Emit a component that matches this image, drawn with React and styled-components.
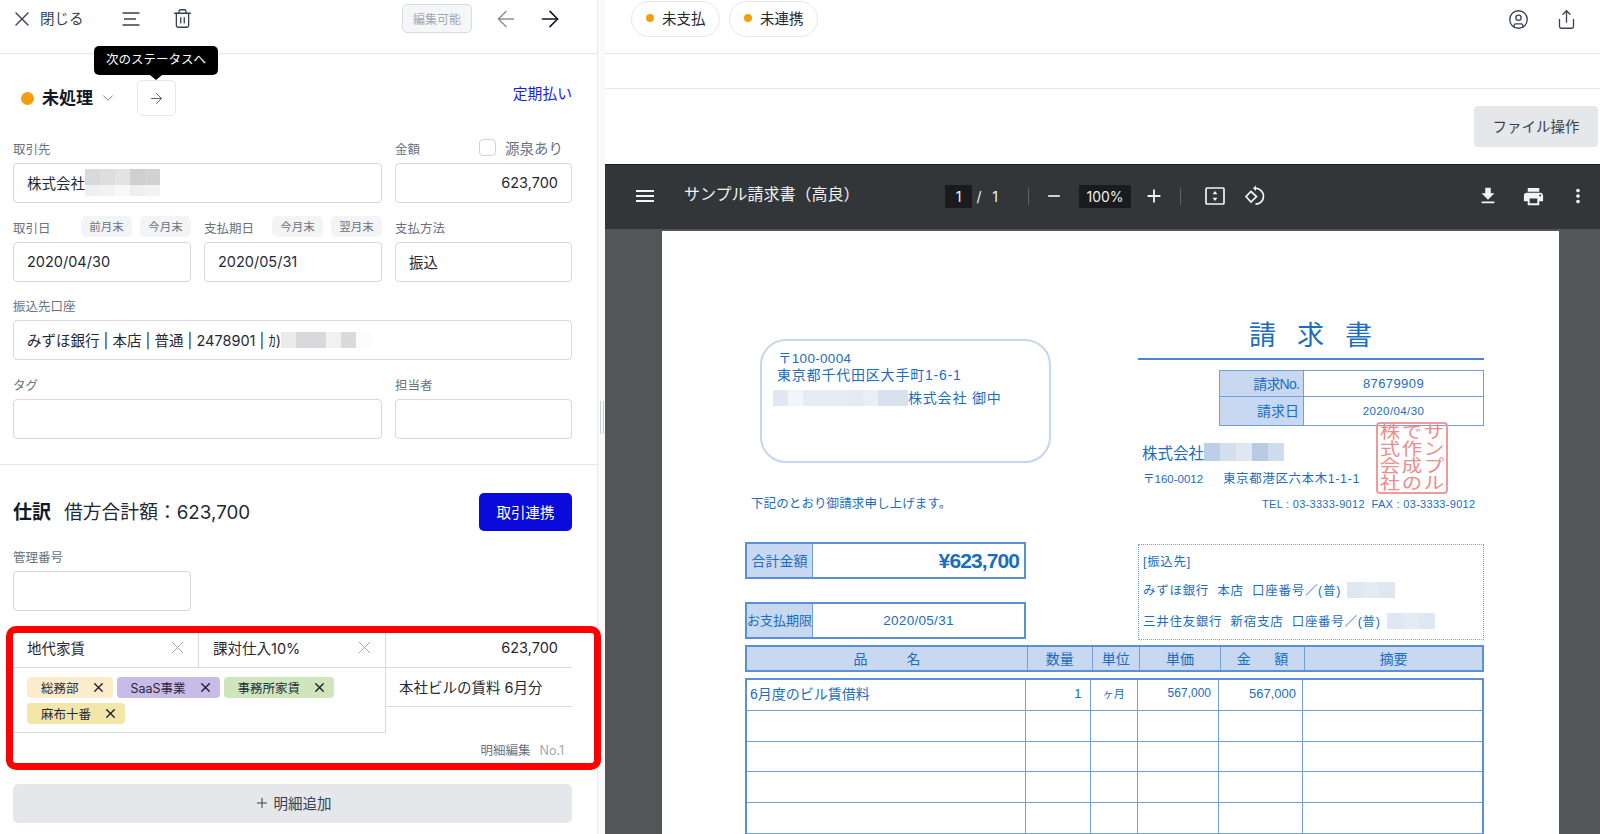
import React from 'react'
import styled, { createGlobalStyle } from 'styled-components'
import { X, Trash2, ArrowLeft, ArrowRight, ChevronDown, CircleUser, Share, Plus } from 'lucide-react'
import { MdMenu, MdFileDownload, MdPrint, MdMoreVert, MdRemove, MdAdd } from 'react-icons/md'

const GlobalStyle = createGlobalStyle`
  html, body { margin: 0; padding: 0; height: 100%; overflow: hidden; background: #fff; }
  body { font-family: Inter, "Noto Sans CJK JP", sans-serif; color: #1f2937; }
  * { box-sizing: border-box; }
`

const Page = styled.div`
  display: flex;
  width: 1600px;
  height: 834px;
  overflow: hidden;
`

/* left panel */
const Panel = styled.div`
  position: relative;
  flex: 0 0 597px;
  height: 834px;
`
const TopBar = styled.div`
  display: flex;
  align-items: center;
  height: 54px;
  padding: 0 34px 16px 10px;
  border-bottom: 1px solid #e5e7eb;
  color: #374151;
`
const CloseText = styled.span`
  margin: -2px 0 0 6px;
  font-size: 14.5px;
`
const BarIcon = styled.span`
  display: flex;
  margin-left: ${p => p.$left}px;
  color: ${p => p.$color || '#374151'};
`
const Editable = styled.span`
  display: flex;
  align-items: center;
  justify-content: center;
  width: 70px;
  height: 29px;
  margin-left: auto;
  padding-bottom: 1px;
  border: 1px solid #d8dbe3;
  border-radius: 5px;
  background: #f5f6f8;
  color: #a3a8b2;
  font-size: 12px;
`
const StatusRow = styled.div`
  display: flex;
  align-items: center;
  height: 36px;
  margin-top: 26px;
  padding: 0 25px 0 21px;
`
const Dot = styled.span`
  width: ${p => p.$size}px;
  height: ${p => p.$size}px;
  border-radius: 50%;
  background: #f59e0b;
  flex: none;
`
const StatusName = styled.span`
  margin: -3px 0 0 8px;
  font-size: 17px;
  font-weight: 700;
  color: #111827;
`
const NextWrap = styled.div`
  position: relative;
  margin-left: 20px;
`
const NextButton = styled.div`
  display: flex;
  align-items: center;
  justify-content: center;
  width: 39px;
  height: 36px;
  border: 1px solid #e5e7eb;
  border-radius: 5px;
  color: #4b5563;
`
const Tooltip = styled.div`
  position: absolute;
  top: -34px;
  left: -43px;
  width: 124px;
  height: 29px;
  border-radius: 5px;
  background: #000;
  color: #fff;
  font-size: 12.5px;
  line-height: 28px;
  text-align: center;
  &::after {
    content: '';
    position: absolute;
    left: 56px;
    bottom: -5px;
    border-left: 6px solid transparent;
    border-right: 6px solid transparent;
    border-top: 5px solid #000;
  }
`
const Recurring = styled.a`
  margin: -12px 0 0 auto;
  color: #1a1af0;
  font-size: 14.8px;
`
const Form = styled.div`
  padding: 21px 25px 0 13px;
`
const FormRow = styled.div`
  display: grid;
  grid-template-columns: ${p => p.$cols};
  column-gap: 13px;
  margin-bottom: 12.67px;
  &:last-child { margin-bottom: 0; }
`
const LabelRow = styled.div`
  display: flex;
  justify-content: space-between;
  height: 26px;
`
const Label = styled.span`
  padding-top: 3px;
  font-size: 12.5px;
  line-height: 20px;
  color: #6b7280;
`
const Chips = styled.div`
  display: flex;
  gap: 8px;
`
const Chip = styled.span`
  display: flex;
  align-items: center;
  justify-content: center;
  width: 51px;
  height: 21px;
  padding-bottom: 1px;
  border-radius: 5px;
  background: #f3f4f6;
  color: #6b7280;
  font-size: 11.5px;
`
const Withholding = styled.label`
  display: flex;
  align-items: center;
  height: 20px;
  margin-right: 9px;
  gap: 9px;
  color: #6b7280;
  font-size: 14.5px;
`
const CheckBox = styled.span`
  width: 17px;
  height: 17px;
  border: 1px solid #d1d5db;
  border-radius: 4px;
`
const Input = styled.div`
  display: flex;
  align-items: center;
  justify-content: ${p => (p.$right ? 'flex-end' : 'flex-start')};
  height: 40px;
  padding: 0 13px 1px;
  border: 1px solid #d5d8e0;
  border-radius: 4px;
  font-size: 14.5px;
  color: #1f2937;
  white-space: nowrap;
`
const MosaicGrid = styled.span`
  display: inline-grid;
  flex: none;
  grid-template-columns: repeat(${p => p.$cols}, ${p => p.$w}px);
  grid-auto-rows: ${p => p.$h};
`
const Cell = styled.span`
  background: ${p => p.$tone};
`

function Mosaic({ tones, w, h = 'auto', cols }) {
  return (
    <MosaicGrid $cols={cols || tones.length} $w={w} $h={h}>
      {tones.map((tone, i) => <Cell key={i} $tone={tone} />)}
    </MosaicGrid>
  )
}

const CompanyBlur = styled.span`
  display: flex;
  height: ${p => p.$h}px;
`
const Divider = styled.div`
  height: 1px;
  margin-top: 25px;
  background: #e5e7eb;
`
const Journal = styled.div`
  padding: 28px 25px 0 13px;
`
const JournalHead = styled.div`
  display: flex;
  align-items: center;
  height: 38px;
`
const JournalTitle = styled.span`
  margin-bottom: 2px;
  font-size: 19px;
  font-weight: 700;
  color: #111827;
`
const JournalTotal = styled.span`
  margin: 0 0 2px 13px;
  font-size: 18.8px;
  color: #1f2937;
`
const LinkButton = styled.button`
  width: 93px;
  height: 38px;
  margin-left: auto;
  padding-bottom: 2px;
  border: 0;
  border-radius: 5px;
  background: #0a0adc;
  color: #fff;
  font: inherit;
  font-size: 14.5px;
`
const ManageField = styled.div`
  width: 178px;
  margin: 14px 0 21px;
`
const LineBox = styled.div`
  position: relative;
`
const LineTop = styled.div`
  display: grid;
  grid-template-columns: 186px 187px 186px;
  height: 36px;
  border-bottom: 1px solid #d8dbe5;
`
const LineCell = styled.div`
  display: flex;
  align-items: center;
  justify-content: ${p => (p.$right ? 'flex-end' : 'space-between')};
  padding: 0 ${p => (p.$right ? 14 : 10)}px 3px 14px;
  border-right: ${p => (p.$right ? 0 : '1px solid #d8dbe5')};
  font-size: 14.5px;
  color: #1f2937;
`
const LineBottom = styled.div`
  display: grid;
  grid-template-columns: 373px 186px;
  align-items: start;
`
const TagCell = styled.div`
  display: flex;
  flex-wrap: wrap;
  align-content: flex-start;
  gap: 5px 4px;
  height: 65px;
  padding: 9px 14px 0;
  border-right: 1px solid #d8dbe5;
  border-bottom: 1px solid #d8dbe5;
`
const Tag = styled.span`
  display: flex;
  align-items: center;
  height: 21px;
  padding: 0 7px 0 14px;
  border-radius: 4px;
  background: ${p => p.$bg};
  color: #1f2937;
  font-size: 12.5px;
`
const TagX = styled(X)`
  margin-left: 12px;
  color: #111827;
`
const MemoCell = styled.div`
  display: flex;
  align-items: center;
  height: 39px;
  padding-left: 13px;
  border-bottom: 1px solid #d8dbe5;
  font-size: 14.5px;
  color: #1f2937;
`
const LineFoot = styled.div`
  display: flex;
  justify-content: flex-end;
  height: 36px;
  padding: 8px 8px 0 0;
  font-size: 12.5px;
  line-height: 20px;
  color: #6b7280;
`
const LineNo = styled.span`
  margin-left: 9px;
  color: #a3a8b2;
`
const Highlight = styled.div`
  position: absolute;
  top: -6px;
  left: -7px;
  width: 595px;
  height: 144px;
  border: 7px solid #ff0000;
  border-radius: 10px;
  z-index: 3;
  pointer-events: none;
`
const AddLine = styled.div`
  display: flex;
  align-items: center;
  justify-content: center;
  gap: 4px;
  height: 39px;
  margin-top: 15px;
  padding-bottom: 1px;
  border-radius: 5px;
  background: #e5e7eb;
  color: #374151;
  font-size: 14.5px;
`

/* splitter */
const Splitter = styled.div`
  flex: 0 0 8px;
  display: flex;
  align-items: flex-start;
  justify-content: center;
  gap: 2px;
  padding-top: 401px;
  border-left: 1px solid #e5e7eb;
  background: #fafafa;
`
const Grip = styled.span`
  width: 1px;
  height: 33px;
  background: #c9ccd1;
`

/* right panel */
const Viewer = styled.div`
  flex: 1;
  min-width: 0;
  display: flex;
  flex-direction: column;
  height: 834px;
`
const PillBar = styled.div`
  display: flex;
  align-items: flex-start;
  gap: 9px;
  height: 54px;
  padding: 1px 0 0 26px;
  border-bottom: 1px solid #e5e7eb;
`
const Pill = styled.span`
  display: flex;
  align-items: center;
  gap: 8px;
  width: 89px;
  height: 36px;
  padding: 0 0 3px 14px;
  border: 1px solid #e5e7eb;
  border-radius: 18px;
  font-size: 14.5px;
  color: #1f2937;
`
const PillIcons = styled.div`
  display: flex;
  align-items: center;
  gap: 27px;
  height: 36px;
  margin-left: auto;
  padding-right: 23px;
  color: #374151;
`
const EmptyBar = styled.div`
  height: 35px;
  border-bottom: 1px solid #e5e7eb;
`
const ActionBar = styled.div`
  display: flex;
  justify-content: flex-end;
  height: 75px;
  padding: 17px 2px 0 0;
`
const FileButton = styled.div`
  display: flex;
  align-items: center;
  justify-content: center;
  width: 124px;
  height: 41px;
  padding-bottom: 3px;
  border-radius: 4px;
  background: #e5e7eb;
  color: #374151;
  font-size: 14.5px;
`
const PdfBar = styled.div`
  display: flex;
  align-items: center;
  flex: 0 0 65px;
  padding: 0 10px 2px 28px;
  border-top: 1px solid #1c1e20;
  background: #323639;
  color: #f1f3f4;
`
const PdfTitle = styled.span`
  flex: 0 0 261px;
  margin: 0 0 6px 27px;
  font-size: 16px;
`
const PdfBox = styled.span`
  flex: none;
  width: ${p => p.$w}px;
  height: 23px;
  margin-left: ${p => p.$left || 0}px;
  background: #191b1c;
  font-size: 14px;
  line-height: 23px;
  text-align: center;
`
const PdfText = styled.span`
  flex: none;
  width: ${p => p.$w}px;
  font-size: 14px;
  text-align: center;
`
const PdfRule = styled.span`
  flex: none;
  width: 1px;
  height: 17px;
  margin-left: ${p => p.$left}px;
  background: #5f6368;
`
const PdfIcon = styled.span`
  flex: none;
  display: flex;
  justify-content: center;
  width: 24px;
  margin-left: ${p => p.$left}px;
  ${p => p.$push && 'margin-left: auto;'}
`
const PdfBody = styled.div`
  flex: 1;
  min-height: 0;
  overflow: hidden;
  padding: 2px 0 0 57px;
  background: #525659;
`
const Paper = styled.div`
  width: 897px;
  height: 640px;
  padding: 91px 75px 0 83px;
  background: #fff;
  color: #1a6dbf;
  font-family: "Liberation Sans", "Noto Sans CJK JP", sans-serif;
`
const PaperTop = styled.div`
  display: grid;
  grid-template-columns: 393px 346px;
  height: 323px;
`
const AddressBox = styled.div`
  width: 291px;
  height: 124px;
  margin: 17px 0 0 15px;
  padding: 9px 0 0 15px;
  border: 2px solid #c5d6ee;
  border-radius: 26px;
  font-size: 14px;
  line-height: 17px;
`
const AddressLine = styled.div`
  display: flex;
  align-items: flex-start;
  margin: ${p => p.$top || 0}px 0 0 ${p => p.$left || 0}px;
  font-size: ${p => p.$size || 14}px;
  letter-spacing: ${p => p.$spacing || 0.8}px;
`
const Notice = styled.div`
  margin: 32px 0 0 6px;
  font-size: 12.5px;
  line-height: 18px;
  letter-spacing: 0.1px;
`
const DocBox = styled.div`
  display: grid;
  grid-template-columns: 66px 1fr;
  width: 281px;
  height: ${p => p.$h}px;
  margin-top: ${p => p.$top}px;
  border: 2px solid #5a90d8;
`
const DocLabel = styled.div`
  display: flex;
  align-items: center;
  justify-content: center;
  padding-bottom: 2px;
  border-right: 1px solid #6f9fdc;
  background: #c8d8f0;
  font-size: ${p => p.$size}px;
  white-space: nowrap;
`
const DocValue = styled.div`
  display: flex;
  align-items: center;
  justify-content: ${p => (p.$right ? 'flex-end' : 'center')};
  padding-right: ${p => (p.$right ? '5px' : 0)};
  font-size: ${p => p.$size}px;
  font-weight: ${p => (p.$bold ? 700 : 400)};
  letter-spacing: ${p => p.$spacing}px;
`
const DocRight = styled.div`
  position: relative;
`
const DocTitle = styled.div`
  height: 36px;
  padding-left: 111px;
  font-size: 27px;
  line-height: 28px;
  letter-spacing: 21px;
  white-space: nowrap;
`
const TitleRule = styled.div`
  height: 2px;
  background: #4a86d0;
`
const InfoTable = styled.div`
  display: grid;
  grid-template-columns: 84px 1fr;
  grid-template-rows: 26px 28px;
  width: 265px;
  margin: 10px 0 0 81px;
  border: 1px solid #6f9fdc;
`
const InfoLabel = styled.div`
  display: flex;
  align-items: center;
  justify-content: flex-end;
  padding: 0 4px 2px 0;
  border-right: 1px solid #6f9fdc;
  border-bottom: ${p => (p.$last ? 0 : '1px solid #6f9fdc')};
  background: #c8d8f0;
  font-size: 14px;
  letter-spacing: ${p => p.$spacing || 0}px;
`
const InfoValue = styled.div`
  display: flex;
  align-items: center;
  justify-content: center;
  border-bottom: ${p => (p.$last ? 0 : '1px solid #6f9fdc')};
  font-size: ${p => p.$size}px;
  letter-spacing: 0.4px;
`
const Company = styled.div`
  display: flex;
  align-items: center;
  height: 19px;
  margin: 16px 0 0 4px;
  font-size: 15.5px;
`
const SenderAddress = styled.div`
  display: flex;
  margin: 10px 0 0 5px;
  font-size: 12.5px;
  line-height: 16px;
  letter-spacing: 0.6px;
`
const Postal = styled.span`
  flex: 0 0 80px;
  font-size: 11.5px;
  letter-spacing: 0;
`
const Phones = styled.div`
  margin: 9px 0 0 124px;
  font-size: 11px;
  line-height: 16px;
  letter-spacing: 0.3px;
  white-space: nowrap;
`
const BankBox = styled.div`
  height: 96px;
  margin-top: 32px;
  padding: 7px 0 0 4px;
  border: 1px dotted #6f9fdc;
  font-size: 12.5px;
`
const BankLine = styled.div`
  display: flex;
  align-items: center;
  height: 16px;
  margin-top: ${p => p.$top || 0}px;
  letter-spacing: 0.7px;
  white-space: pre;
`
const BankBlur = styled.span`
  display: flex;
  height: 16px;
  margin: 2px 0 0 6px;
`
const Stamp = styled.div`
  position: absolute;
  top: 100px;
  left: 238px;
  display: grid;
  grid-template-columns: repeat(3, 22px);
  grid-auto-rows: 17px;
  justify-content: center;
  align-content: center;
  width: 72px;
  height: 72px;
  border: 2px solid #ef9a9a;
  border-radius: 4px;
  color: #ee8b8b;
  font-size: 17px;
  line-height: 17px;
  text-align: center;
`
const StampChar = styled.span`
  display: block;
  transform: scaleX(1.2);
`
const TableHead = styled.div`
  display: grid;
  grid-template-columns: 281px 64.5px 47.5px 81px 84px 1fr;
  height: 27px;
  border: 2px solid #5a90d8;
  background: #c8d8f0;
`
const HeadCell = styled.div`
  display: flex;
  align-items: center;
  justify-content: center;
  padding-bottom: 2px;
  border-right: ${p => (p.$last ? 0 : '1px solid #6f9fdc')};
  font-size: 14px;
  white-space: pre;
`
const TableBody = styled.div`
  margin-top: 6px;
  border: 2px solid #5a90d8;
  border-bottom: 0;
`
const TableRow = styled.div`
  display: grid;
  grid-template-columns: 279px 64.5px 47.5px 81px 84px 1fr;
  height: 30.8px;
  border-bottom: 1px solid #6f9fdc;
`
const BodyCell = styled.div`
  display: flex;
  align-items: center;
  justify-content: ${p => p.$align || 'flex-start'};
  padding: 0 ${p => p.$pr || 0}px 3px ${p => p.$pl || 0}px;
  border-right: ${p => (p.$last ? 0 : '1px solid #6f9fdc')};
  font-size: ${p => p.$size || 13}px;
`

const MenuLines = () => (
  <svg width="18" height="16" viewBox="0 0 18 16" fill="none" stroke="currentColor" strokeWidth="1.5">
    <path d="M0.5 2h17M2 8h12M0.5 14h17" />
  </svg>
)
const FitIcon = () => (
  <svg width="22" height="22" viewBox="0 0 22 22" fill="none" stroke="currentColor" strokeWidth="1.7">
    <rect x="2" y="3" width="18" height="16" rx="1" />
    <path d="M11 6l2.5 3.2h-5zM11 16l2.5-3.2h-5z" fill="currentColor" stroke="none" />
  </svg>
)
const RotateIcon = () => (
  <svg width="24" height="24" viewBox="0 0 24 24" fill="none" stroke="currentColor" strokeWidth="1.7">
    <path d="M8 7.5l5.5 5-5.5 5.5-5-5.5z" />
    <path d="M12 4.2c5 0 8.5 3.6 8.5 8s-3.5 8-8 8" />
    <path d="M13 1.5l-3 2.8 3 2.8" fill="currentColor" stroke="none" />
  </svg>
)

const companyTones = ['#d9d9dc', '#dedee0', '#e3e3e5', '#cfcfd1', '#d2d2d4', '#f0f0f1', '#f3f3f4', '#f8f8f8', '#efeff0', '#f3f3f4']
const accountTones = ['#ebebec', '#d9d9db', '#d9d9db', '#f1f1f2', '#dadadc', '#fbfbfb']
const addresseeTones = ['#e2e8f3', '#f2f5fa', '#e6ebf5', '#e6ebf5', '#e6ebf5', '#e4e9f3', '#eaeef6', '#d8e2ef', '#d8e2ef']
const senderTones = ['#bccfe8', '#d3dfef', '#e0e7f2', '#b9cbe4', '#cfdcee']
const bankTones = ['#dfe7f3', '#e3ebf5', '#dfe7f3']
const stampChars = ['株', 'で', 'サ', '式', '作', 'ン', '会', '成', 'プ', '社', 'の', 'ル']
const tags = [
  { name: '総務部', bg: '#fdeccc' },
  { name: 'SaaS事業', bg: '#c9bbe8' },
  { name: '事務所家賃', bg: '#cfe6bd' },
  { name: '麻布十番', bg: '#f3e6a9' },
]
const emptyRows = [1, 2, 3, 4, 5]

function App() {
  return (
    <Page>
      <GlobalStyle />
      <Panel>
        <TopBar>
          <X size={24} strokeWidth={1.4} />
          <CloseText>閉じる</CloseText>
          <BarIcon $left={38}><MenuLines /></BarIcon>
          <BarIcon $left={32}><Trash2 size={21} strokeWidth={1.5} /></BarIcon>
          <Editable>編集可能</Editable>
          <BarIcon $left={21} $color="#8b9099"><ArrowLeft size={26} strokeWidth={1.3} /></BarIcon>
          <BarIcon $left={18} $color="#111827"><ArrowRight size={26} strokeWidth={1.5} /></BarIcon>
        </TopBar>

        <StatusRow>
          <Dot $size={13} />
          <StatusName>未処理</StatusName>
          <BarIcon $left={6} $color="#6b7280"><ChevronDown size={18} strokeWidth={1.2} /></BarIcon>
          <NextWrap>
            <Tooltip>次のステータスへ</Tooltip>
            <NextButton><ArrowRight size={17} strokeWidth={1.3} /></NextButton>
          </NextWrap>
          <Recurring>定期払い</Recurring>
        </StatusRow>

        <Form>
          <FormRow $cols="369px 177px">
            <div>
              <LabelRow><Label>取引先</Label></LabelRow>
              <Input>株式会社<CompanyBlur $h={27}><Mosaic tones={companyTones} w={15} cols={5} h="16px 11px" /></CompanyBlur></Input>
            </div>
            <div>
              <LabelRow>
                <Label>金額</Label>
                <Withholding><CheckBox />源泉あり</Withholding>
              </LabelRow>
              <Input $right>623,700</Input>
            </div>
          </FormRow>
          <FormRow $cols="178px 178px 177px">
            <div>
              <LabelRow>
                <Label>取引日</Label>
                <Chips><Chip>前月末</Chip><Chip>今月末</Chip></Chips>
              </LabelRow>
              <Input>2020/04/30</Input>
            </div>
            <div>
              <LabelRow>
                <Label>支払期日</Label>
                <Chips><Chip>今月末</Chip><Chip>翌月末</Chip></Chips>
              </LabelRow>
              <Input>2020/05/31</Input>
            </div>
            <div>
              <LabelRow><Label>支払方法</Label></LabelRow>
              <Input>振込</Input>
            </div>
          </FormRow>
          <FormRow $cols="559px">
            <div>
              <LabelRow><Label>振込先口座</Label></LabelRow>
              <Input>みずほ銀行 | 本店 | 普通 | 2478901 | ｶ)<CompanyBlur $h={16}><Mosaic tones={accountTones} w={15} h="16px" /></CompanyBlur></Input>
            </div>
          </FormRow>
          <FormRow $cols="369px 177px">
            <div>
              <LabelRow><Label>タグ</Label></LabelRow>
              <Input />
            </div>
            <div>
              <LabelRow><Label>担当者</Label></LabelRow>
              <Input />
            </div>
          </FormRow>
        </Form>

        <Divider />

        <Journal>
          <JournalHead>
            <JournalTitle>仕訳</JournalTitle>
            <JournalTotal>借方合計額：623,700</JournalTotal>
            <LinkButton>取引連携</LinkButton>
          </JournalHead>
          <ManageField>
            <LabelRow><Label>管理番号</Label></LabelRow>
            <Input />
          </ManageField>
          <LineBox>
            <Highlight />
            <LineTop>
              <LineCell>地代家賃<X size={21} strokeWidth={1.1} color="#9ca3af" /></LineCell>
              <LineCell>課対仕入10%<X size={21} strokeWidth={1.1} color="#9ca3af" /></LineCell>
              <LineCell $right>623,700</LineCell>
            </LineTop>
            <LineBottom>
              <TagCell>
                {tags.map(tag => (
                  <Tag key={tag.name} $bg={tag.bg}>{tag.name}<TagX size={15} strokeWidth={2} /></Tag>
                ))}
              </TagCell>
              <MemoCell>本社ビルの賃料 6月分</MemoCell>
            </LineBottom>
            <LineFoot>明細編集<LineNo>No.1</LineNo></LineFoot>
          </LineBox>
          <AddLine><Plus size={16} strokeWidth={1.5} />明細追加</AddLine>
        </Journal>
      </Panel>

      <Splitter><Grip /><Grip /></Splitter>

      <Viewer>
        <PillBar>
          <Pill><Dot $size={8} />未支払</Pill>
          <Pill><Dot $size={8} />未連携</Pill>
          <PillIcons>
            <CircleUser size={21} strokeWidth={1.5} />
            <Share size={21} strokeWidth={1.5} />
          </PillIcons>
        </PillBar>
        <EmptyBar />
        <ActionBar><FileButton>ファイル操作</FileButton></ActionBar>

        <PdfBar>
          <MdMenu size={24} />
          <PdfTitle>サンプル請求書（高良）</PdfTitle>
          <PdfBox $w={27}>1</PdfBox>
          <PdfText $w={14}>/</PdfText>
          <PdfText $w={18}>1</PdfText>
          <PdfRule $left={24} />
          <PdfIcon $left={13}><MdRemove size={20} /></PdfIcon>
          <PdfBox $w={52} $left={13}>100%</PdfBox>
          <PdfIcon $left={11}><MdAdd size={22} /></PdfIcon>
          <PdfRule $left={14} />
          <PdfIcon $left={22}><FitIcon /></PdfIcon>
          <PdfIcon $left={16}><RotateIcon /></PdfIcon>
          <PdfIcon $push><MdFileDownload size={22} /></PdfIcon>
          <PdfIcon $left={21}><MdPrint size={23} /></PdfIcon>
          <PdfIcon $left={21}><MdMoreVert size={22} /></PdfIcon>
        </PdfBar>

        <PdfBody>
          <Paper>
            <PaperTop>
              <div>
                <AddressBox>
                  <AddressLine $left={1} $size={13.5} $spacing={0.3}>〒100-0004</AddressLine>
                  <AddressLine>東京都千代田区大手町1-6-1</AddressLine>
                  <AddressLine $top={6} $left={-4}>
                    <Mosaic tones={addresseeTones} w={15} h="16px" />株式会社 御中
                  </AddressLine>
                </AddressBox>
                <Notice>下記のとおり御請求申し上げます。</Notice>
                <DocBox $h={37} $top={29}>
                  <DocLabel $size={14}>合計金額</DocLabel>
                  <DocValue $right $bold $size={21} $spacing={-0.9}>¥623,700</DocValue>
                </DocBox>
                <DocBox $h={37} $top={23}>
                  <DocLabel $size={13}>お支払期限</DocLabel>
                  <DocValue $size={13.5} $spacing={0.3}>2020/05/31</DocValue>
                </DocBox>
              </div>
              <DocRight>
                <DocTitle>請求書</DocTitle>
                <TitleRule />
                <InfoTable>
                  <InfoLabel $spacing={-0.8}>請求No.</InfoLabel>
                  <InfoValue $size={13}>87679909</InfoValue>
                  <InfoLabel $last>請求日</InfoLabel>
                  <InfoValue $last $size={11.5}>2020/04/30</InfoValue>
                </InfoTable>
                <Company>株式会社<Mosaic tones={senderTones} w={16} h="18px" /></Company>
                <SenderAddress>
                  <Postal>〒160-0012</Postal>
                  <span>東京都港区六本木1-1-1</span>
                </SenderAddress>
                <Phones>TEL : 03-3333-9012&nbsp;&nbsp;FAX : 03-3333-9012</Phones>
                <BankBox>
                  <BankLine>[振込先]</BankLine>
                  <BankLine $top={13}>みずほ銀行  本店  口座番号／(普)<BankBlur><Mosaic tones={bankTones} w={16} h="16px" /></BankBlur></BankLine>
                  <BankLine $top={15}>三井住友銀行  新宿支店  口座番号／(普)<BankBlur><Mosaic tones={bankTones} w={16} h="16px" /></BankBlur></BankLine>
                </BankBox>
                <Stamp>{stampChars.map(c => <StampChar key={c}>{c}</StampChar>)}</Stamp>
              </DocRight>
            </PaperTop>

            <TableHead>
              <HeadCell>品          名</HeadCell>
              <HeadCell>数量</HeadCell>
              <HeadCell>単位</HeadCell>
              <HeadCell>単価</HeadCell>
              <HeadCell>金      額</HeadCell>
              <HeadCell $last>摘要</HeadCell>
            </TableHead>
            <TableBody>
              <TableRow>
                <BodyCell $pl={3} $size={14}>6月度のビル賃借料</BodyCell>
                <BodyCell $align="flex-end" $pr={8}>1</BodyCell>
                <BodyCell $align="center" $size={11}>ヶ月</BodyCell>
                <BodyCell $align="flex-end" $pr={7} $size={12}>567,000</BodyCell>
                <BodyCell $align="flex-end" $pr={6} $size={13}>567,000</BodyCell>
                <BodyCell $last />
              </TableRow>
              {emptyRows.map(row => (
                <TableRow key={row}>
                  <BodyCell /><BodyCell /><BodyCell /><BodyCell /><BodyCell /><BodyCell $last />
                </TableRow>
              ))}
            </TableBody>
          </Paper>
        </PdfBody>
      </Viewer>
    </Page>
  )
}

export default App
